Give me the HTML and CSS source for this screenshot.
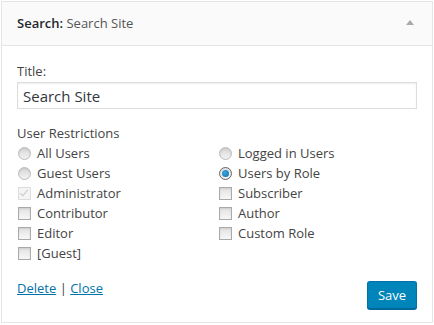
FILE: index.html
```html
<!DOCTYPE html>
<html>
<head>
<meta charset="utf-8">
<link rel="stylesheet" href="styles.css">
</head>
<body>
<div class="widget">
  <div class="widget-top">
    <h3 class="widget-title">Search:<span class="in-widget-title"> Search Site</span></h3>
    <span class="toggle"></span>
  </div>
  <div class="widget-inside">
    <label class="field-label">Title:</label>
    <input class="text-input" type="text" value="Search Site">
    <div class="section-label">User Restrictions</div>
    <div class="options">
      <label class="opt"><input type="radio" name="r">All Users</label>
      <label class="opt"><input type="radio" name="r">Logged in Users</label>
      <label class="opt"><input type="radio" name="r">Guest Users</label>
      <label class="opt"><input type="radio" name="r" checked>Users by Role</label>
      <label class="opt"><input type="checkbox" checked disabled>Administrator</label>
      <label class="opt"><input type="checkbox">Subscriber</label>
      <label class="opt"><input type="checkbox">Contributor</label>
      <label class="opt"><input type="checkbox">Author</label>
      <label class="opt"><input type="checkbox">Editor</label>
      <label class="opt"><input type="checkbox">Custom Role</label>
      <label class="opt"><input type="checkbox">[Guest]</label>
    </div>
    <div class="widget-control-actions">
      <div class="links"><a href="#">Delete</a> | <a href="#">Close</a></div>
      <button class="button-primary">Save</button>
    </div>
  </div>
</div>
</body>
</html>
```
FILE: styles.css
```css
* { box-sizing: border-box; }
html, body { background: #fff; }
body {
  margin: 1px;
  font-family: "Open Sans", "Liberation Sans", sans-serif;
  font-size: 13px;
  line-height: 20px;
  color: #444;
}
.widget {
  width: 432px;
  height: 322px;
  border: 1px solid #e5e5e5;
  background: #fff;
  box-shadow: 0 1px 1px rgba(0,0,0,.04);
}
.widget-top {
  height: 44px;
  background: #fafafa;
  border-bottom: 1px solid #e5e5e5;
  display: flex;
  align-items: center;
  justify-content: space-between;
  padding: 0 17px 0 15px;
}
.widget-title {
  margin: 0;
  font-size: 13px;
  font-weight: 600;
  color: #23282d;
  line-height: 20px;
  padding-bottom: 1px;
}
.in-widget-title {
  font-weight: 400;
  color: #555;
}
.toggle {
  width: 0;
  height: 0;
  border-left: 4px solid transparent;
  border-right: 4px solid transparent;
  border-bottom: 5px solid #aaa;
  margin-bottom: 2px;
  margin-right: 1px;
}
.widget-inside {
  padding: 15px 15px 0 15px;
}
.field-label {
  display: block;
  color: #444;
}
.text-input {
  display: block;
  width: 400px;
  height: 27px;
  margin-top: 1px;
  border: 1px solid #ddd;
  box-shadow: inset 0 1px 2px rgba(0,0,0,.07);
  background: #fff;
  font-family: "Open Sans", "Liberation Sans", sans-serif;
  font-size: 15px;
  color: #32373c;
  padding: 0 5px;
  outline: none;
}
.section-label {
  margin-top: 14px;
}
.options {
  display: grid;
  grid-template-columns: 201px 1fr;
  grid-auto-rows: 20px;
}
.opt {
  display: flex;
  align-items: center;
  white-space: nowrap;
}
.opt input {
  -webkit-appearance: none;
  appearance: none;
  margin: 0 6px 0 1px;
  width: 13px;
  height: 13px;
  border: 1px solid #b4b9be;
  background: #fff;
  box-shadow: inset 0 1px 2px rgba(0,0,0,.1);
  position: relative;
  flex: none;
}
.opt input[type=radio] {
  border-radius: 50%;
  background: linear-gradient(#d8d8d8, #f2f2f2);
  border-color: #bbb;
}
.opt input[type=radio]:checked {
  background: #eee;
  border-color: #666;
}
.opt input[type=radio]:checked::before {
  content: "";
  position: absolute;
  left: 2px;
  top: 2px;
  width: 7px;
  height: 7px;
  border-radius: 50%;
  background: radial-gradient(circle at 40% 40%, #3fa6dd, #0a6fa8);
}
.opt input[type=checkbox] {
  background: linear-gradient(#e2e2e2, #f7f7f7);
  border-color: #aaa;
}
.opt input[type=checkbox]:disabled {
  background: #f4f4f4;
  border-color: #ddd;
  box-shadow: none;
}
.opt input[type=checkbox]:checked::before {
  content: "";
  position: absolute;
  left: 3px;
  top: 0px;
  width: 3px;
  height: 7px;
  border: solid #c8c8c8;
  border-width: 0 1px 1px 0;
  transform: rotate(40deg);
}
.widget-control-actions {
  margin-top: 15px;
  display: flex;
  justify-content: space-between;
  align-items: flex-start;
  width: 400px;
}
.links a {
  color: #0073aa;
  text-decoration: underline;
}
.button-primary {
  margin-top: 3px;
  height: 28px;
  width: 50px;
  padding: 0;
  font-family: "Open Sans", "Liberation Sans", sans-serif;
  font-size: 13px;
  color: #fff;
  background: #0085ba;
  border: 1px solid #0073aa;
  border-bottom-color: #006799;
  border-radius: 3px;
  box-shadow: 0 1px 0 #006799;
}
```
